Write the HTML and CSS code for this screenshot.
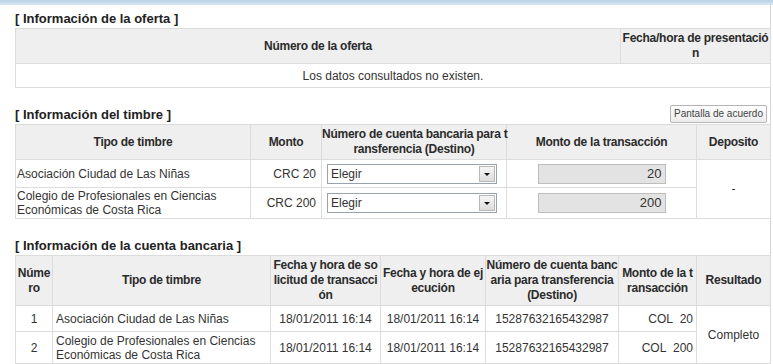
FILE: index.html
```html
<!DOCTYPE html>
<html>
	<head>
		<meta charset="UTF-8">
		<title>Información de la oferta</title>
		<link rel="stylesheet" href="styles.css">
	</head>
	<body>
	<div class="topbar"></div>
	<div id="box">

	    <!-- oferta -->
	    <div class="section first">
	        <div class="tit"><h3>[ Información de la oferta ]</h3></div>
	        <table class="grid">
	            <colgroup><col style="width:605px"><col style="width:150px"></colgroup>
	            <tr>
	                <th>Número de la oferta</th>
	                <th>Fecha/hora de presentació<br>n</th>
	            </tr>
	            <tr class="empty">
	                <td colspan="2" class="c">Los datos consultados no existen.</td>
	            </tr>
	        </table>
	    </div>

	    <!-- timbre -->
	    <div class="section">
	        <div class="tit">
	            <h3>[ Información del timbre ]</h3>
	            <a class="btn" href="javascript:;">Pantalla de acuerdo</a>
	        </div>
	        <table class="grid timbre">
	            <colgroup>
	                <col style="width:235px"><col style="width:71px"><col style="width:185px"><col style="width:190px"><col style="width:74px">
	            </colgroup>
	            <tr>
	                <th>Tipo de timbre</th>
	                <th>Monto</th>
	                <th>Número de cuenta bancaria para t<br>ransferencia (Destino)</th>
	                <th>Monto de la transacción</th>
	                <th>Deposito</th>
	            </tr>
	            <tr class="h28">
	                <td>Asociación Ciudad de Las Niñas</td>
	                <td class="r">CRC 20</td>
	                <td><div class="sel"><span>Elegir</span><i></i></div></td>
	                <td class="c"><div class="inp">20</div></td>
	                <td class="c" rowspan="2">-</td>
	            </tr>
	            <tr class="h30">
	                <td>Colegio de Profesionales en Ciencias Económicas de Costa Rica</td>
	                <td class="r">CRC 200</td>
	                <td><div class="sel"><span>Elegir</span><i></i></div></td>
	                <td class="c"><div class="inp">200</div></td>
	            </tr>
	        </table>
	    </div>

	    <!-- cuenta bancaria -->
	    <div class="section">
	        <div class="tit"><h3>[ Información de la cuenta bancaria ]</h3></div>
	        <table class="grid">
	            <colgroup>
	                <col style="width:37px"><col style="width:218px"><col style="width:110px"><col style="width:105px"><col style="width:133px"><col style="width:78px"><col style="width:74px">
	            </colgroup>
	            <tr>
	                <th>Núme<br>ro</th>
	                <th>Tipo de timbre</th>
	                <th>Fecha y hora de so<br>licitud de transacci<br>ón</th>
	                <th>Fecha y hora de ej<br>ecución</th>
	                <th>Número de cuenta banc<br>aria para transferencia<br>(Destino)</th>
	                <th>Monto de la t<br>ransacción</th>
	                <th>Resultado</th>
	            </tr>
	            <tr class="h26">
	                <td class="c">1</td>
	                <td>Asociación Ciudad de Las Niñas</td>
	                <td class="c">18/01/2011 16:14</td>
	                <td class="c">18/01/2011 16:14</td>
	                <td class="c">15287632165432987</td>
	                <td class="r">COL&nbsp;&nbsp;20</td>
	                <td class="c" rowspan="2">Completo</td>
	            </tr>
	            <tr class="h32">
	                <td class="c">2</td>
	                <td>Colegio de Profesionales en Ciencias Económicas de Costa Rica</td>
	                <td class="c">18/01/2011 16:14</td>
	                <td class="c">18/01/2011 16:14</td>
	                <td class="c">15287632165432987</td>
	                <td class="r">COL&nbsp;&nbsp;200</td>
	            </tr>
	        </table>
	    </div>

	</div>
	</body>
</html>
```

FILE: styles.css
```css
body{
    margin:0;
    font-family:"Liberation Sans", Arial, sans-serif;
    font-size:12px;
    color:#333;
    background:#fff;
}
.topbar{
    height:5px;
    background:linear-gradient(#b8d0e6, #d9e7f4);
}
#box{
    width:755px;
    margin-left:15px;
    border-right:1px solid #d4d4d4;
    min-height:359px;
}
.section{
    padding-top:17px;
}
.section.first{
    padding-top:4px;
}
.tit{
    display:flex;
    justify-content:space-between;
    align-items:flex-end;
    height:19px;
}
.tit h3{
    margin:0;
    font-size:13px;
    line-height:19px;
    color:#222;
}
.btn{
    display:block;
    height:16px;
    line-height:16px;
    padding:0 3px;
    margin:0 3px 1px 0;
    font-size:10px;
    color:#444;
    text-decoration:none;
    border:1px solid #b5b5b5;
    border-radius:2px;
    background:linear-gradient(#fff, #ececec);
}
.grid{
    width:755px;
    table-layout:fixed;
    border-collapse:collapse;
}
.grid th{
    background:#efefef;
    border:1px solid #dcdcdc;
    font-size:12px;
    font-weight:bold;
    letter-spacing:-0.25px;
    line-height:15px;
    padding:2px 0;
    white-space:nowrap;
    text-align:center;
    color:#2b2b2b;
}
.grid td{
    border:1px solid #dcdcdc;
    line-height:14px;
    padding:1px 3px;
}
.grid tr.empty{
    height:24px;
}
.grid tr.h26{
    height:26px;
}
.grid tr.h28{
    height:28px;
}
.grid tr.h30{
    height:30px;
}
.grid tr.h32{
    height:32px;
}
.grid td.c{
    text-align:center;
}
.grid td.r{
    text-align:right;
}
.timbre td:first-child{
    padding-left:1px;
}
.timbre td.r{
    padding-right:5px;
}
.sel{
    display:flex;
    align-items:center;
    width:168px;
    height:18px;
    margin-left:2px;
    border:1px solid #9aa3ad;
    background:#fff;
}
.sel span{
    flex:1;
    padding-left:3px;
    line-height:16px;
}
.sel i{
    width:14px;
    height:14px;
    margin-right:1px;
    border:1px solid #b8b8b8;
    background:linear-gradient(#f6f6f6, #dcdcdc);
    position:relative;
}
.sel i:after{
    content:"";
    position:absolute;
    left:4px;
    top:6px;
    border-left:3px solid transparent;
    border-right:3px solid transparent;
    border-top:3px solid #111;
}
.inp{
    width:120px;
    height:18px;
    line-height:18px;
    margin:0 auto;
    padding:0 3px;
    text-align:right;
    background:#e3e3e3;
    border:1px solid #bdbdbd;
    font-size:13px;
}
```
